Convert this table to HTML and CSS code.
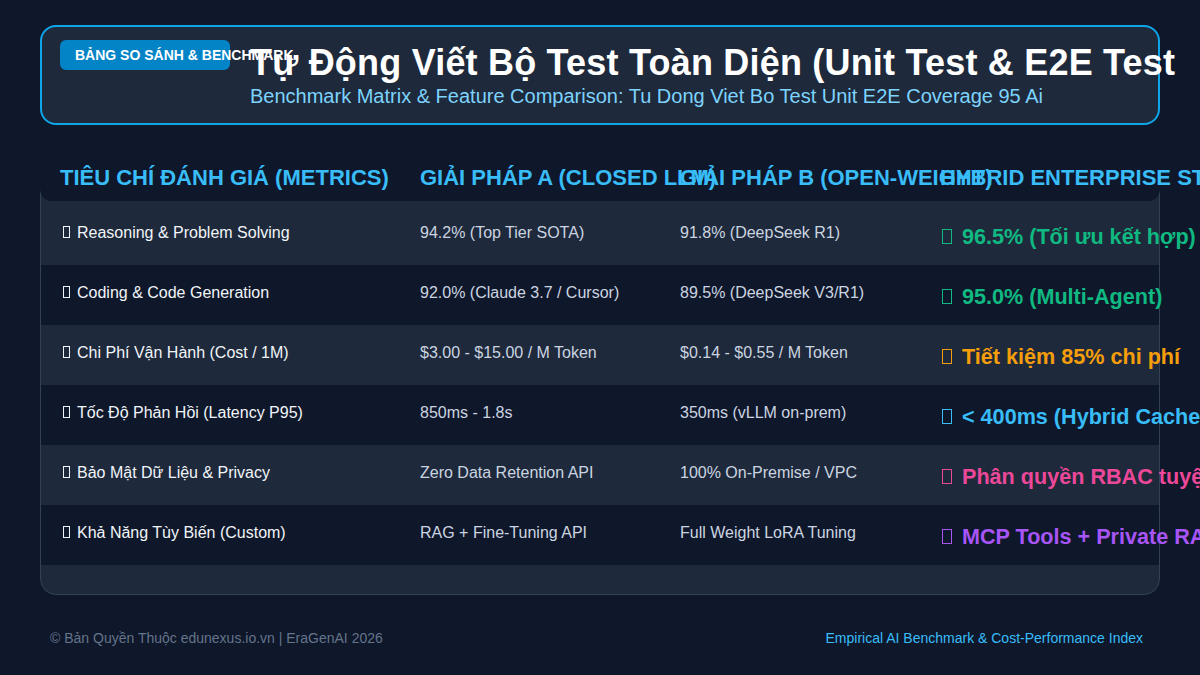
FILE: index.html
```html
<!DOCTYPE html>
<html lang="vi">
<head>
<meta charset="utf-8">
<title>Bảng So Sánh &amp; Benchmark</title>
<link rel="stylesheet" href="styles.css">
</head>
<body>
<div class="page">
  <header class="hero">
    <div class="badge">BẢNG SO SÁNH &amp; BENCHMARK</div>
    <div class="hero-text">
      <h1 class="title">Tự Động Viết Bộ Test Toàn Diện (Unit Test &amp; E2E Test</h1>
      <p class="subtitle">Benchmark Matrix &amp; Feature Comparison: Tu Dong Viet Bo Test Unit E2E Coverage 95 Ai</p>
    </div>
  </header>

  <section class="matrix">
    <div class="matrix-head">
      <div class="hcell">TIÊU CHÍ ĐÁNH GIÁ (METRICS)</div>
      <div class="hcell">GIẢI PHÁP A (CLOSED LLM)</div>
      <div class="hcell">GIẢI PHÁP B (OPEN-WEIGHT)</div>
      <div class="hcell">HYBRID ENTERPRISE STACK</div>
    </div>
    <div class="row first">
      <div class="cell metric"><span class="tofu" aria-hidden="true"></span>Reasoning &amp; Problem Solving</div>
      <div class="cell val">94.2% (Top Tier SOTA)</div>
      <div class="cell val">91.8% (DeepSeek R1)</div>
      <div class="cell hybrid green"><span class="tofu" aria-hidden="true"></span>96.5% (Tối ưu kết hợp)</div>
    </div>
    <div class="row dark">
      <div class="cell metric"><span class="tofu" aria-hidden="true"></span>Coding &amp; Code Generation</div>
      <div class="cell val">92.0% (Claude 3.7 / Cursor)</div>
      <div class="cell val">89.5% (DeepSeek V3/R1)</div>
      <div class="cell hybrid green"><span class="tofu" aria-hidden="true"></span>95.0% (Multi-Agent)</div>
    </div>
    <div class="row">
      <div class="cell metric"><span class="tofu" aria-hidden="true"></span>Chi Phí Vận Hành (Cost / 1M)</div>
      <div class="cell val">$3.00 - $15.00 / M Token</div>
      <div class="cell val">$0.14 - $0.55 / M Token</div>
      <div class="cell hybrid orange"><span class="tofu" aria-hidden="true"></span>Tiết kiệm 85% chi phí</div>
    </div>
    <div class="row dark">
      <div class="cell metric"><span class="tofu" aria-hidden="true"></span>Tốc Độ Phản Hồi (Latency P95)</div>
      <div class="cell val">850ms - 1.8s</div>
      <div class="cell val">350ms (vLLM on-prem)</div>
      <div class="cell hybrid blue"><span class="tofu" aria-hidden="true"></span>&lt; 400ms (Hybrid Cache)</div>
    </div>
    <div class="row">
      <div class="cell metric"><span class="tofu" aria-hidden="true"></span>Bảo Mật Dữ Liệu &amp; Privacy</div>
      <div class="cell val">Zero Data Retention API</div>
      <div class="cell val">100% On-Premise / VPC</div>
      <div class="cell hybrid pink"><span class="tofu" aria-hidden="true"></span>Phân quyền RBAC tuyệt đối</div>
    </div>
    <div class="row dark">
      <div class="cell metric"><span class="tofu" aria-hidden="true"></span>Khả Năng Tùy Biến (Custom)</div>
      <div class="cell val">RAG + Fine-Tuning API</div>
      <div class="cell val">Full Weight LoRA Tuning</div>
      <div class="cell hybrid purple"><span class="tofu" aria-hidden="true"></span>MCP Tools + Private RAG</div>
    </div>
  </section>

  <footer class="footer">
    <span class="copy">© Bản Quyền Thuộc edunexus.io.vn | EraGenAI 2026</span>
    <span class="index">Empirical AI Benchmark &amp; Cost-Performance Index</span>
  </footer>
</div>
</body>
</html>
```

FILE: styles.css
```css
html, body {
  margin: 0;
  padding: 0;
  width: 1200px;
  height: 675px;
  overflow: hidden;
  background: #0f172a;
}

body {
  font-family: "Liberation Sans", Arial, sans-serif;
  color: #f8fafc;
}

.page {
  padding: 25px 40px 0;
}

.hero {
  box-sizing: border-box;
  height: 100px;
  display: flex;
  align-items: flex-start;
  gap: 20px;
  padding: 13px 18px;
  border: 2px solid #0ea5e9;
  border-radius: 16px;
  background: #1e293b;
}

.badge {
  flex-shrink: 0;
  box-sizing: border-box;
  width: 170px;
  height: 30px;
  padding: 0 15px;
  line-height: 30px;
  font-size: 14px;
  font-weight: 700;
  white-space: nowrap;
  color: #ffffff;
  background: #0284c7;
  border-radius: 6px;
}

.hero-text {
  flex-shrink: 0;
}

.title {
  margin: 1px 0 0;
  font-size: 36px;
  line-height: 43px;
  font-weight: 700;
  letter-spacing: 0.2px;
  white-space: nowrap;
  color: #ffffff;
}

.subtitle {
  margin: 0;
  font-size: 20px;
  line-height: 24px;
  white-space: nowrap;
  color: #7dd3fc;
}

.matrix {
  margin-top: 35px;
  border: 1px solid #334155;
  border-radius: 16px;
  background: #1e293b;
  padding-bottom: 29px;
}

.matrix-head {
  box-sizing: border-box;
  height: 51px;
  margin: -11px -1px 0;
  padding-top: 15px;
  display: grid;
  grid-template-columns: 360px 260px 260px 240px;
  background: #0f172a;
  border-radius: 0 0 12px 12px;
}

.hcell {
  padding-left: 20px;
  font-size: 22px;
  line-height: 26px;
  font-weight: 700;
  color: #38bdf8;
  white-space: nowrap;
}

.row {
  display: grid;
  grid-template-columns: 359px 260px 260px 239px;
  align-items: start;
  padding: 18px 0 16px;
}

.row.first {
  padding-top: 22px;
}

.row.dark {
  background: #0f172a;
}

.cell {
  padding-left: 20px;
  white-space: nowrap;
  font-size: 16px;
  line-height: 20px;
}

.cell.metric {
  padding-left: 19px;
  color: #f1f5f9;
}

.cell.val {
  color: #cbd5e1;
}

.cell.hybrid {
  padding-top: 1px;
  font-size: 21.6px;
  line-height: 25px;
  font-weight: 700;
}

.tofu {
  display: inline-block;
  box-sizing: border-box;
  width: 7px;
  height: 12px;
  margin: 0 7px 0 3px;
  border: 1px solid currentColor;
}

.hybrid .tofu {
  width: 10px;
  height: 15px;
  margin: 0 10px 0 2px;
}

.green { color: #10b981; }
.orange { color: #f59e0b; }
.blue { color: #38bdf8; }
.pink { color: #ec4899; }
.purple { color: #a855f7; }

.footer {
  margin-top: 35px;
  padding: 0 17px 0 10px;
  display: flex;
  justify-content: space-between;
  font-size: 14px;
  line-height: 16px;
}

.copy {
  color: #64748b;
}

.index {
  color: #38bdf8;
}
```
